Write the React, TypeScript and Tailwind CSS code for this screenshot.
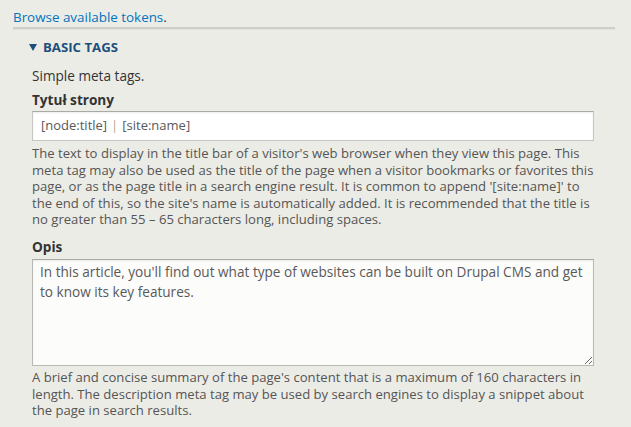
import React from 'react'

const font = { fontFamily: '"Open Sans", "Noto Sans", sans-serif' }

function Description({ children, className = 'mt-[4px]' }: { children: React.ReactNode; className?: string }) {
  return (
    <div className={`${className} text-[13.1px] leading-[16.6px] text-[#555555]`}>
      {children}
    </div>
  )
}

export default function App() {
  return (
    <div
      className="h-[427px] w-[631px] overflow-hidden bg-[#ecece6] text-[#333333]"
      style={font}
    >
      <div className="pl-[13px] pt-[8px] text-[13.4px] leading-[18px]">
        <a href="#" className="text-[#0074bd]">
          Browse available tokens
        </a>
        .
      </div>

      <div className="ml-[13px] mt-[1px] w-[602px] border-t-2 border-[#cfcfca] shadow-[0_1px_0_#e2e2dd]" />

      <div className="pl-[29px] pt-[9px]">
        <div className="flex items-center text-[13.2px] font-bold leading-[18px] text-[#1d4f7c]">
          <svg width="8" height="7" viewBox="0 0 8 7" className="mr-[6px]">
            <path d="M0 0 L8 0 L4 7 Z" fill="#1d4f7c" />
          </svg>
          <span>BASIC TAGS</span>
        </div>
      </div>

      <div className="box-content w-[562px] pl-[32px] pt-[11px]">
        <div className="text-[13.6px] leading-[18px]">Simple meta tags.</div>

        <div className="mt-[6px] text-[13.6px] font-bold leading-[18px]">Tytuł strony</div>
        <div className="mt-[2px] flex h-[30px] items-center border border-[#c6c6c2] border-t-[#a9a9a5] bg-white pl-[8px] text-[13px] text-[#595959] shadow-[inset_0_1px_2px_rgba(0,0,0,0.08)]">
          [node:title] <span className="mx-[4px] text-[#b9a58e]">|</span> [site:name]
        </div>
        <Description>
          The text to display in the title bar of a visitor's web browser when they view this
          page. This meta tag may also be used as the title of the page when a visitor bookmarks
          or favorites this page, or as the page title in a search engine result. It is common to
          append '[site:name]' to the end of this, so the site's name is automatically added. It
          is recommended that the title is no greater than 55 – 65 characters long, including
          spaces.
        </Description>

        <div className="mt-[10px] text-[13.6px] font-bold leading-[18px]">Opis</div>
        <textarea
          readOnly
          defaultValue="In this article, you'll find out what type of websites can be built on Drupal CMS and get to know its key features."
          className="mt-[3px] block h-[107px] w-full resize-y border border-[#b9b9b5] border-t-[#a9a9a5] bg-[#fcfcfa] px-[7px] pt-[2px] text-[13.6px] leading-[20px] text-[#595959] shadow-[inset_0_1px_2px_rgba(0,0,0,0.08)] outline-none"
          style={font}
        />
        <Description className="mt-[3px]">
          A brief and concise summary of the page's content that is a maximum of 160 characters in
          length. The description meta tag may be used by search engines to display a snippet
          about the page in search results.
        </Description>
      </div>
    </div>
  )
}
